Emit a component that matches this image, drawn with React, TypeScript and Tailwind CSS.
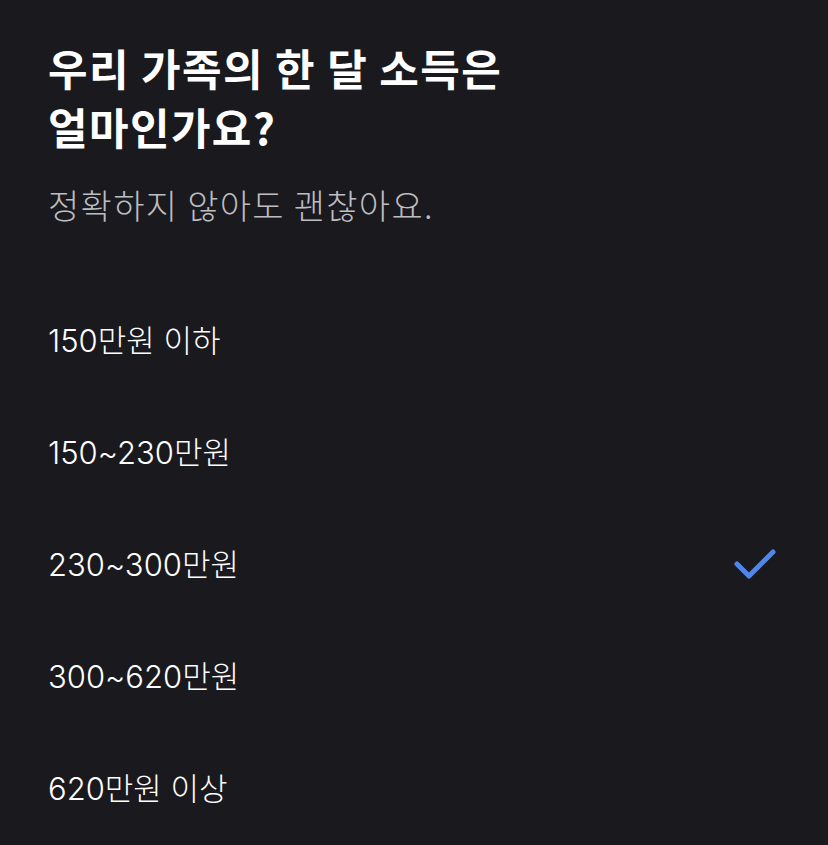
import React from "react";

const options = ["150만원 이하", "150~230만원", "230~300만원", "300~620만원", "620만원 이상"];

export default function App() {
  return (
    <div
      className="w-[828px] h-[845px] bg-[#19191e] text-white overflow-hidden"
      style={{ fontFamily: '"Noto Sans CJK KR", "Noto Sans", sans-serif' }}
    >
      <div className="pl-[48px] pr-[48px] pt-[38px]">
        <h1 className="text-[43px] leading-[59px] font-bold text-white tracking-[1.4px]">
          우리 가족의 한 달 소득은
          <br />
          얼마인가요?
        </h1>
        <p className="mt-[26px] text-[34px] leading-[46px] font-light text-[#bdbdc2] tracking-[1.3px]">
          정확하지 않아도 괜찮아요.
        </p>
      </div>
      <div className="mt-[57px] flex flex-col">
        {options.map((o, i) => (
          <div key={o} className="h-[112px] flex items-center justify-between pl-[48px] pr-[50px]">
            <span
              className="text-[31px] leading-[40px] font-light text-white"
              style={{ fontFamily: 'Inter, "Noto Sans CJK KR", sans-serif' }}
            >
              {o}
            </span>
            {i === 2 && (
              <svg width="44" height="34" viewBox="0 0 44 34" fill="none">
                <path d="M3 16 L15 28 L39 4" stroke="#4f86ea" strokeWidth="5" strokeLinecap="round" strokeLinejoin="round" />
              </svg>
            )}
          </div>
        ))}
      </div>
    </div>
  );
}
